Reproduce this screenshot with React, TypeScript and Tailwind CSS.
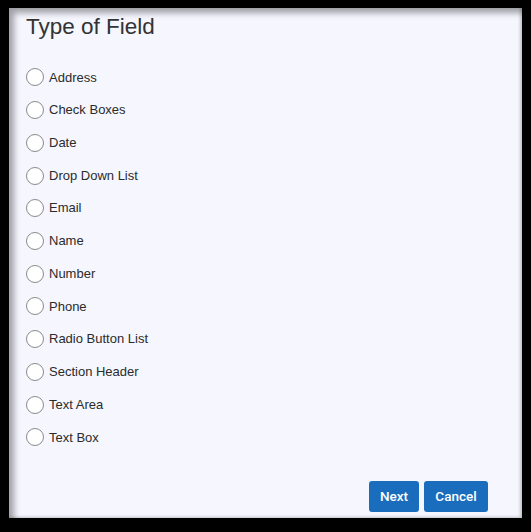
import { useState } from "react";

const fieldTypes = [
  "Address",
  "Check Boxes",
  "Date",
  "Drop Down List",
  "Email",
  "Name",
  "Number",
  "Phone",
  "Radio Button List",
  "Section Header",
  "Text Area",
  "Text Box",
];

export default function App() {
  const [selected, setSelected] = useState<string | null>(null);

  return (
    <div className="w-[531px] h-[532px] bg-black pt-[8px] pl-[9px] font-['Liberation_Sans',Arial,sans-serif]">
      <div className="w-[513px] h-[510px] bg-[#f5f6fe] shadow-[inset_5px_5px_6px_rgba(0,0,0,0.35),inset_-2px_-1px_3px_rgba(0,0,0,0.2)] flex flex-col pl-[17px] pr-[34px]">
        {/* Title */}
        <h1 className="text-[22.5px] leading-[28px] text-[#333] mt-[5px]">Type of Field</h1>

        {/* Options */}
        <div className="flex flex-col mt-[20px]">
          {fieldTypes.map((type) => (
            <label key={type} className="flex items-center h-[32.73px] cursor-pointer">
              <span className="w-[18px] h-[18px] rounded-full border border-[#8a8a8a] bg-white flex items-center justify-center">
                {selected === type && <span className="w-[8px] h-[8px] rounded-full bg-[#1a6dbd]" />}
              </span>
              <input
                type="radio"
                name="fieldType"
                className="hidden"
                checked={selected === type}
                onChange={() => setSelected(type)}
              />
              <span className="ml-[5px] text-[13px] text-[#2b2b2b]">{type}</span>
            </label>
          ))}
        </div>

        {/* Buttons */}
        <div className="mt-auto mb-[6px] flex justify-end gap-[5px] font-['Roboto',sans-serif]">
          <button className="w-[50px] h-[31px] rounded-[3px] bg-[#1a6dbd] text-white text-[13.5px] font-medium">Next</button>
          <button className="w-[64px] h-[31px] rounded-[3px] bg-[#1a6dbd] text-white text-[13.5px] font-medium">Cancel</button>
        </div>
      </div>
    </div>
  );
}
